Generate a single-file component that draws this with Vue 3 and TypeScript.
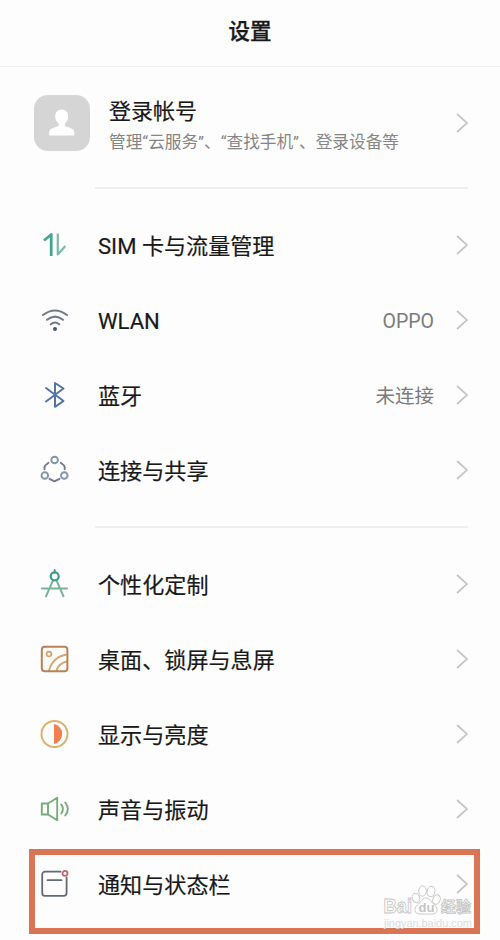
<script setup lang="ts">
interface Item {
  icon: string
  label: string
  value?: string
}

const groups: Item[][] = [
  [
    { icon: 'sim', label: 'SIM 卡与流量管理' },
    { icon: 'wlan', label: 'WLAN', value: 'OPPO' },
    { icon: 'bluetooth', label: '蓝牙', value: '未连接' },
    { icon: 'share', label: '连接与共享' },
  ],
  [
    { icon: 'custom', label: '个性化定制' },
    { icon: 'desktop', label: '桌面、锁屏与息屏' },
    { icon: 'display', label: '显示与亮度' },
    { icon: 'sound', label: '声音与振动' },
    { icon: 'notice', label: '通知与状态栏' },
  ],
]
</script>

<template>
  <main class="screen">
    <header class="header"><h1>设置</h1></header>

    <section class="account">
      <div class="avatar">
        <svg viewBox="0 0 56 56" width="56" height="56">
          <path d="M27.700 14.500c-4.200 0-6.500 3-6.500 6.800 0 3 1.400 5.800 3.300 7.300v2.200c-1 1.500-9.300 2-9.300 6.200v3.500h25V37c0-4.200-8.300-4.700-9.300-6.200v-2.200c1.900-1.500 3.300-4.300 3.300-7.300 0-3.800-2.300-6.800-6.500-6.800z" fill="#fff" />
        </svg>
      </div>
      <div class="account-text">
        <div class="name">登录帐号</div>
        <div class="desc">管理“云服务”、“查找手机”、登录设备等</div>
      </div>
      <svg class="chevron" viewBox="0 0 12 20" width="12" height="20"><path d="M1 1l10 9L1 19" /></svg>
    </section>

    <section v-for="(group, g) in groups" :key="g" class="group">
      <div v-for="item in group" :key="item.icon" class="row">
        <svg class="icon" viewBox="0 0 30 30" width="30" height="30">
          <g v-if="item.icon === 'sim'">
            <path d="M11.200 26V4.500L4 10.500" stroke="#45a58e" stroke-width="2.800" stroke-linecap="butt" />
            <path d="M17.800 3.500V24.500L25.300 16" stroke="#7cbca4" stroke-width="2.200" stroke-linecap="butt" />
          </g>
          <g v-else-if="item.icon === 'wlan'" stroke="#727b8c" stroke-width="2.100">
            <path d="M3 10Q15 1 27 10M7 14.800Q15 8.300 23 14.800M10.800 19.300Q15 15.700 19.200 19.300" />
            <circle cx="15" cy="24" r="2" fill="#4c5667" stroke="none" />
          </g>
          <path v-else-if="item.icon === 'bluetooth'" d="M6 8l17.500 13L15 26.800V3l8.500 5.500L6 21.500" stroke="#5374a3" stroke-width="2" />
          <g v-else-if="item.icon === 'share'" stroke="#737b88" stroke-width="1.900">
            <path d="M4.500 14.300V12q.2-1.500 4-4.200M24.700 14.300V12q-.2-1.500-4-4.200M9.500 23.800l5 2.500 5-2.500" />
            <g stroke="#8593ad"><circle cx="14.600" cy="5" r="3.300" /><circle cx="4.800" cy="20.500" r="3.300" /><circle cx="24.300" cy="20.500" r="3.300" /></g>
          </g>
          <g v-else-if="item.icon === 'custom'" stroke="#76b198" stroke-width="2">
            <path d="M13 11.300L6 27.300M16.500 11.300l7 16M2 19.500h5.500M11 19.500h7.500M22 19.500h5" />
            <path d="M14.700 1v2.500" stroke="#3d9e8c" />
            <circle cx="14.700" cy="7.300" r="4" stroke="#3d9e8c" stroke-width="2.200" />
          </g>
          <g v-else-if="item.icon === 'desktop'" stroke="#d9a66a" stroke-width="1.800">
            <path d="M9 26.500Q13 12.500 27 10.500M16.500 26.500Q19 19 27 17.500" />
            <circle cx="9" cy="10" r="2.400" />
            <rect x="1.800" y="2.700" width="25.600" height="24.600" rx="3" stroke="#b98155" stroke-width="2" />
          </g>
          <g v-else-if="item.icon === 'display'">
            <circle cx="14.500" cy="15" r="13" stroke="#d9b36c" stroke-width="2" />
            <path d="M14 5a10.200 10.200 0 0 1 0 20z" fill="#f27f50" />
          </g>
          <g v-else-if="item.icon === 'sound'" stroke="#78ab7c" stroke-width="1.900">
            <path d="M1.800 9.500H8L17.200 3.800V26.200L8 20.500H1.800zM8 9.500v11M21.300 10.500q3.200 4.500 0 9M25.300 8.500q5 6.500 0 13" />
          </g>
          <g v-else stroke="#626a76" stroke-width="1.800">
            <path d="M20.500 2.700H5a2.800 2.800 0 0 0-2.800 2.800V24A2.800 2.800 0 0 0 5 26.800h18.800A2.800 2.800 0 0 0 26.600 24V8.500" />
            <path d="M7.500 11.200h14" />
            <circle cx="25" cy="4.300" r="2.500" stroke="#bd6672" />
          </g>
        </svg>
        <span class="label">{{ item.label }}</span>
        <span v-if="item.value" class="value">{{ item.value }}</span>
        <svg class="chevron" viewBox="0 0 12 20" width="12" height="20"><path d="M1 1l10 9L1 19" /></svg>
      </div>
    </section>

    <div class="highlight"></div>
    <div class="watermark">
      <svg viewBox="0 0 92 36" width="92" height="36">
        <g fill="#fff" stroke="#c9c9c9" stroke-width="1">
          <ellipse cx="34" cy="14" rx="3.700" ry="4.800" transform="rotate(-20 34 14)" />
          <ellipse cx="40.500" cy="7" rx="3.800" ry="5.200" />
          <ellipse cx="49" cy="7.500" rx="3.800" ry="5.200" transform="rotate(12 49 7.500)" />
          <ellipse cx="54.500" cy="15.500" rx="3.700" ry="4.800" transform="rotate(20 54.500 15.500)" />
          <path d="M44 14c-4 0-5 4-8.500 7-4 3.500-3.500 9 2.500 9 3 0 9 0 12 0 6 0 6.500-5.500 2.500-9-3.500-3-4.500-7-8.500-7z" />
        </g>
        <text x="1.500" y="28.500" class="wm-bai" textLength="28.500" lengthAdjust="spacingAndGlyphs">Bai</text>
        <text x="36.500" y="28" class="wm-du">du</text>
        <text x="59" y="28" class="wm-cn">经验</text>
      </svg>
      <div class="wm-url">jingyan.baidu.com</div>
    </div>
  </main>
</template>

<style>
body {
  margin: 0;
  background: #fdfdfd;
}
</style>

<style scoped>
.screen {
  position: relative;
  box-sizing: border-box;
  width: 500px;
  height: 940px;
  overflow: hidden;
  background: #fdfdfd;
  color: #191919;
  font-family: Roboto, "Noto Sans CJK SC", sans-serif;
}
.header {
  box-sizing: border-box;
  height: 67px;
  padding-bottom: 2px;
  display: flex;
  align-items: center;
  justify-content: center;
  border-bottom: 1px solid #f1f1f1;
}
h1 {
  margin: 0;
  font-size: 21.500px;
  line-height: 32px;
  font-weight: 500;
  -webkit-text-stroke: 0.300px #191919;
}
.account {
  box-sizing: border-box;
  height: 120px;
  padding: 0 32px 8px 33.500px;
  display: flex;
  align-items: center;
}
.avatar {
  width: 56px;
  height: 56px;
  border-radius: 14px;
  background: #d5d5d5;
}
.account-text {
  flex: 1;
  margin-left: 19.500px;
  padding-top: 5px;
  white-space: nowrap;
}
.name {
  font-size: 22px;
  line-height: 30px;
  -webkit-text-stroke: 0.200px #191919;
}
.desc {
  margin-top: 4px;
  font-size: 16.650px;
  line-height: 24px;
  color: #858585;
}
.group {
  position: relative;
  padding: 20px 0 19px;
}
.group::before {
  content: "";
  display: block;
  height: 2px;
  margin: -20px 32px 18px 95px;
  background: #efefef;
}
.row {
  display: flex;
  align-items: center;
  height: 75px;
  padding: 0 32px 0 40px;
}
.icon {
  flex: none;
  fill: none;
  stroke-linecap: round;
  stroke-linejoin: round;
}
.label {
  flex: 1;
  margin-left: 28px;
  padding-top: 2px;
  font-size: 22.100px;
  line-height: 32px;
  white-space: nowrap;
  -webkit-text-stroke: 0.200px #191919;
}
.value {
  margin-right: 22px;
  padding-top: 4px;
  font-size: 19.500px;
  line-height: 30px;
  color: #7b7b7b;
}
.chevron {
  flex: none;
  fill: none;
  stroke: #c6c6c6;
  stroke-width: 1.800;
}
.highlight {
  position: absolute;
  left: 29px;
  top: 849px;
  box-sizing: border-box;
  width: 451px;
  height: 85px;
  border: 6px solid #d97455;
}
.watermark {
  position: absolute;
  left: 382px;
  top: 884px;
  width: 92px;
}
.watermark svg {
  display: block;
}
.watermark text {
  fill: #fff;
  stroke: #c6c6c6;
  stroke-width: 0.900px;
  font-family: "Liberation Sans", "Noto Sans CJK SC", sans-serif;
}
.watermark .wm-bai {
  font-size: 20px;
  font-weight: 700;
}
.watermark .wm-du {
  font-size: 13px;
  font-weight: 700;
  fill: #c4c4c4;
  stroke: none;
}
.watermark .wm-cn {
  font-size: 15px;
  font-weight: 700;
}
.wm-url {
  margin: -3px 0 0 2px;
  font: 10.900px/12px "Liberation Sans", sans-serif;
  color: #dcdcdc;
}
</style>
